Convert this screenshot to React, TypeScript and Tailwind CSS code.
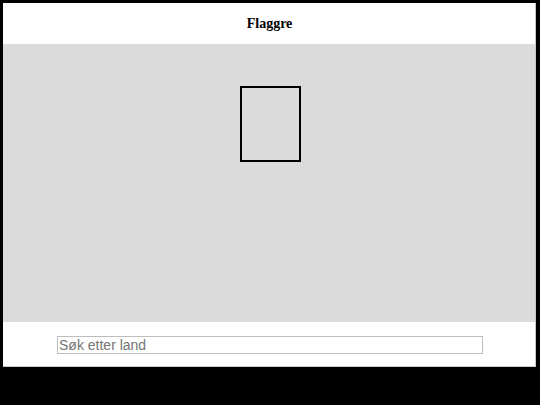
import React from "react";

export default function App() {
  return (
    <div className="w-[540px] h-[405px] bg-black pt-[3px] pl-[3px]">
      <div className="w-[533px] h-[364px] bg-white flex flex-col border-r border-b border-[#c8c8c8]">
        <header className="h-[41px] flex items-center justify-center pl-[1px]">
          <h1 className="text-[14px] leading-none font-bold text-black pt-[1px]" style={{ fontFamily: '"Liberation Serif", "Times New Roman", serif' }}>
            Flaggre
          </h1>
        </header>
        <main className="h-[278px] bg-[#dbdbdb] flex justify-center pt-[42px] pl-[2px]">
          <div className="w-[61px] h-[76px] border-2 border-black" />
        </main>
        <footer className="flex-1 flex justify-center pt-[14px] pl-[2px]">
          <input
            type="text"
            placeholder="Søk etter land"
            className="w-[426px] h-[18px] border border-[#bdbdbd] px-[1px] text-[14px] text-black placeholder:text-[#757575] outline-none"
            style={{ fontFamily: '"Liberation Sans", Arial, sans-serif' }}
          />
        </footer>
      </div>
    </div>
  );
}
